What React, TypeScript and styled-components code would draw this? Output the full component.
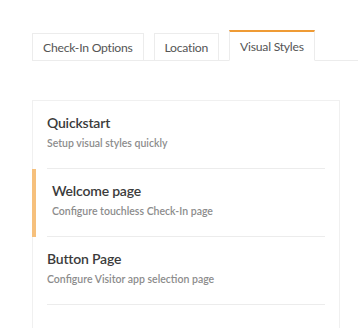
import React from "react";
import styled, { createGlobalStyle } from "styled-components";

const Global = createGlobalStyle`
  html, body { margin: 0; padding: 0; background: #ffffff; }
  body { font-family: Lato, "Open Sans", sans-serif; overflow: hidden; }
  * { box-sizing: border-box; }
`;

const Page = styled.div`
  padding: 31px 0 0 32px;
  height: 328px;
  overflow: hidden;
`;

const TabBar = styled.div`
  display: flex;
  align-items: flex-end;
  gap: 10px;
  border-bottom: 1px solid #ececec;
  height: 30px;
`;

const Tab = styled.div<{ $active?: boolean }>`
  height: ${(p) => (p.$active ? "31px" : "28px")};
  margin-bottom: -1px;
  padding: 0 10px;
  display: flex;
  align-items: center;
  justify-content: center;
  font-size: 12.2px;
  letter-spacing: -0.25px;
  color: #555555;
  background: #ffffff;
  border: 1px solid #ececec;
  border-bottom: 1px solid ${(p) => (p.$active ? "#ffffff" : "#ececec")};
  border-top: ${(p) => (p.$active ? "2px solid #ef9b35" : "1px solid #ececec")};
  padding-top: ${(p) => (p.$active ? "1px" : "0")};
  white-space: nowrap;
`;

const Panel = styled.div`
  margin-top: 39px;
  width: 308px;
  border: 1px solid #f0f0f0;
  border-bottom: none;
  height: 240px;
`;

const Row = styled.div<{ $active?: boolean }>`
  position: relative;
  padding: 0 14px;
  &::before {
    content: "";
    display: ${(p) => (p.$active ? "block" : "none")};
    position: absolute;
    left: -1px;
    top: 0;
    bottom: 0;
    width: 4px;
    background: #f6c07c;
  }
`;

const RowInner = styled.div<{ $active?: boolean }>`
  height: 68px;
  border-bottom: 1px solid #ececec;
  padding: 12px 0 0 ${(p) => (p.$active ? "5px" : "0")};
  display: flex;
  flex-direction: column;
  gap: 2px;
`;

const Title = styled.div`
  font-size: 14px;
  letter-spacing: -0.2px;
  font-weight: 600;
  color: #3b3b3b;
  line-height: 20px;
`;

const Subtitle = styled.div`
  font-size: 10.5px;
  font-weight: 600;
  color: #8c8c8c;
  line-height: 16px;
`;

const items = [
  { title: "Quickstart", sub: "Setup visual styles quickly", active: false },
  { title: "Welcome page", sub: "Configure touchless Check-In page", active: true },
  { title: "Button Page", sub: "Configure Visitor app selection page", active: false },
];

export default function App() {
  return (
    <>
      <Global />
      <Page>
        <TabBar>
          <Tab>Check-In Options</Tab>
          <Tab>Location</Tab>
          <Tab $active>Visual Styles</Tab>
        </TabBar>
        <Panel>
          {items.map((it) => (
            <Row key={it.title} $active={it.active}>
              <RowInner $active={it.active}>
                <Title>{it.title}</Title>
                <Subtitle>{it.sub}</Subtitle>
              </RowInner>
            </Row>
          ))}
        </Panel>
      </Page>
    </>
  );
}
